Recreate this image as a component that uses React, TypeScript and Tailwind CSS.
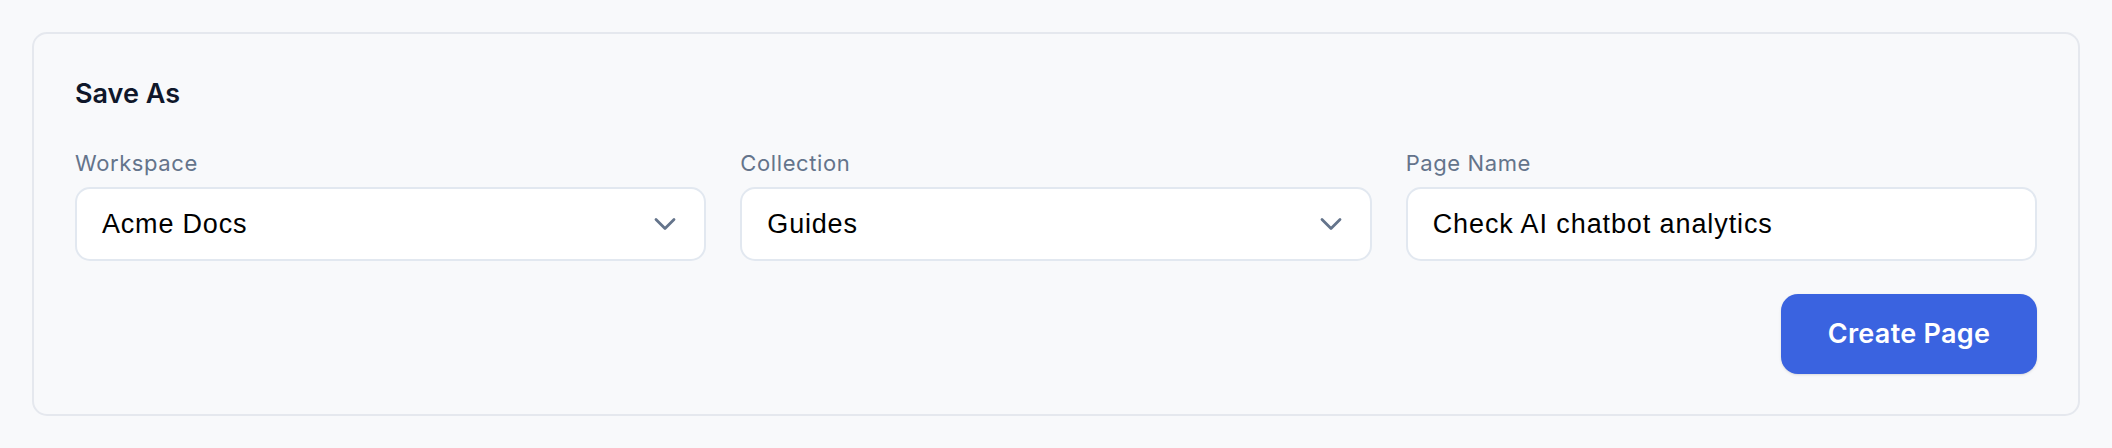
import React from "react";

function Chevron() {
  return (
    <svg width="22" height="14" viewBox="0 0 22 14" fill="none" className="shrink-0">
      <polyline points="2,2.5 11,11.5 20,2.5" stroke="#64748b" strokeWidth="2.8" strokeLinecap="round" strokeLinejoin="round" />
    </svg>
  );
}

const valueFont = { fontFamily: '"Liberation Sans", Arial, sans-serif' };

function SelectField({ label, value }: { label: string; value: string }) {
  return (
    <div className="flex flex-col">
      <label className="text-[22px] leading-[30px] tracking-[0.6px] text-[#64748b] mb-[9px]">{label}</label>
      <div className="h-[74px] rounded-[15px] border-2 border-[#e2e8f0] bg-white flex items-center justify-between pl-[25px] pr-[28px]">
        <span className="text-[27px] tracking-[0.8px] text-black" style={valueFont}>{value}</span>
        <Chevron />
      </div>
    </div>
  );
}

export default function App() {
  return (
    <div className="min-h-[448px] w-full bg-[#f8f9fb] p-8" style={{ fontFamily: 'Inter, "Noto Sans", sans-serif' }}>
      <div className="rounded-[15px] border-2 border-[#e5e8ee] bg-[#f8f9fb] px-[41px] pt-[41px] pb-[40px]">
        <h2 className="text-[27px] leading-[38px] font-semibold text-[#0f172a]">Save As</h2>
        <div className="grid grid-cols-3 gap-[34px] mt-[35px]">
          <SelectField label="Workspace" value="Acme Docs" />
          <SelectField label="Collection" value="Guides" />
          <div className="flex flex-col">
            <label className="text-[22px] leading-[30px] tracking-[0.6px] text-[#64748b] mb-[9px]">Page Name</label>
            <div className="h-[74px] rounded-[15px] border-2 border-[#e2e8f0] bg-white flex items-center pl-[25px] pr-[25px]">
              <span className="text-[27px] tracking-[0.9px] text-black" style={valueFont}>Check AI chatbot analytics</span>
            </div>
          </div>
        </div>
        <div className="flex justify-end mt-[33px]">
          <button className="h-[80px] w-[256px] rounded-[17px] bg-[#3a63e0] text-white text-[27px] tracking-[0.3px] font-semibold shadow-sm">
            Create Page
          </button>
        </div>
      </div>
    </div>
  );
}
